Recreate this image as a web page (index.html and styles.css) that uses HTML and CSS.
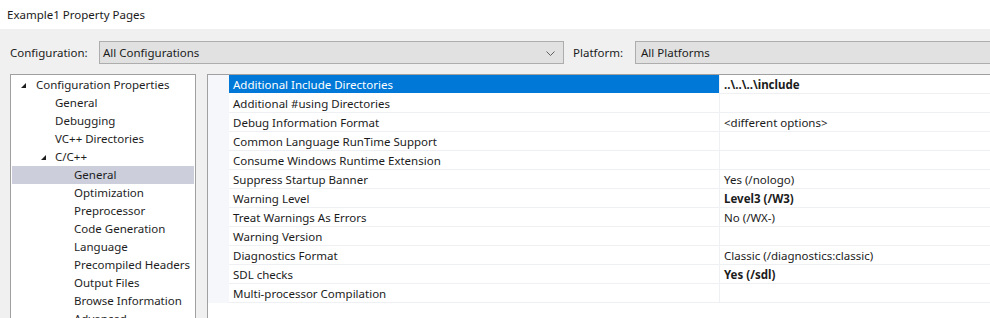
FILE: index.html
```html
<!DOCTYPE html>
<html lang="en">
<head>
<meta charset="utf-8">
<title>Example1 Property Pages</title>
<link rel="stylesheet" href="styles.css">
</head>
<body>
<div class="window">
  <div class="titlebar">Example1 Property Pages</div>
  <div class="client">
    <div class="configrow">
      <span class="lbl lbl-config">Configuration:</span>
      <div class="combo combo-config">
        <span>All Configurations</span>
        <svg class="chev" width="9" height="5" viewBox="0 0 9 5"><path d="M0.5 0.5 L4.5 4.5 L8.5 0.5" fill="none" stroke="#606060" stroke-width="1"/></svg>
      </div>
      <span class="lbl lbl-platform">Platform:</span>
      <div class="combo combo-platform"><span>All Platforms</span></div>
    </div>
    <div class="panes">
      <div class="tree">
        <div class="tnode l0"><span class="tri"></span>Configuration Properties</div>
        <div class="tnode l1">General</div>
        <div class="tnode l1">Debugging</div>
        <div class="tnode l1">VC++ Directories</div>
        <div class="tnode l1 exp"><span class="tri"></span>C/C++</div>
        <div class="tnode l2 sel">General</div>
        <div class="tnode l2">Optimization</div>
        <div class="tnode l2">Preprocessor</div>
        <div class="tnode l2">Code Generation</div>
        <div class="tnode l2">Language</div>
        <div class="tnode l2">Precompiled Headers</div>
        <div class="tnode l2">Output Files</div>
        <div class="tnode l2">Browse Information</div>
        <div class="tnode l2">Advanced</div>
      </div>
      <div class="grid">
        <div class="rows">
          <div class="row selected"><div class="gut"></div><div class="name">Additional Include Directories</div><div class="val bold">..\..\..\include</div></div>
          <div class="row"><div class="gut"></div><div class="name">Additional #using Directories</div><div class="val"></div></div>
          <div class="row"><div class="gut"></div><div class="name">Debug Information Format</div><div class="val">&lt;different options&gt;</div></div>
          <div class="row"><div class="gut"></div><div class="name">Common Language RunTime Support</div><div class="val"></div></div>
          <div class="row"><div class="gut"></div><div class="name">Consume Windows Runtime Extension</div><div class="val"></div></div>
          <div class="row"><div class="gut"></div><div class="name">Suppress Startup Banner</div><div class="val">Yes (/nologo)</div></div>
          <div class="row"><div class="gut"></div><div class="name">Warning Level</div><div class="val bold">Level3 (/W3)</div></div>
          <div class="row"><div class="gut"></div><div class="name">Treat Warnings As Errors</div><div class="val">No (/WX-)</div></div>
          <div class="row"><div class="gut"></div><div class="name">Warning Version</div><div class="val"></div></div>
          <div class="row"><div class="gut"></div><div class="name">Diagnostics Format</div><div class="val">Classic (/diagnostics:classic)</div></div>
          <div class="row"><div class="gut"></div><div class="name">SDL checks</div><div class="val bold">Yes (/sdl)</div></div>
          <div class="row"><div class="gut"></div><div class="name">Multi-processor Compilation</div><div class="val"></div></div>
        </div>
      </div>
    </div>
  </div>
</div>
</body>
</html>
```

FILE: styles.css
```css
* { box-sizing: border-box; }
html, body {
  margin: 0;
  padding: 0;
  width: 990px;
  height: 318px;
  overflow: hidden;
  background: #f0f0f0;
}
body {
  font-family: "Noto Sans", "Open Sans", sans-serif;
  font-size: 11.5px;
  color: #1b1b1b;
}
.window {
  width: 990px;
  height: 318px;
  overflow: hidden;
}
.titlebar {
  height: 29px;
  background: #ffffff;
  padding-left: 7px;
  line-height: 29px;
  color: #1a1a1a;
}
.client {
  background: #f0f0f0;
  padding-top: 12px;
}
.configrow {
  display: flex;
  align-items: center;
  height: 23px;
  width: 1200px;
}
.lbl { white-space: nowrap; flex: none; }
.lbl-config { margin-left: 10px; width: 89px; }
.lbl-platform { margin-left: 9px; width: 62px; }
.combo {
  flex: none;
  height: 23px;
  border: 1px solid #adadad;
  background: #e1e1e1;
  display: flex;
  align-items: center;
  padding-left: 3px;
  position: relative;
}
.combo-config { width: 465px; }
.combo-platform { width: 400px; padding-left: 5px; }
.chev { position: absolute; right: 8px; top: 9px; }
.panes {
  display: flex;
  margin-top: 10px;
  height: 260px;
}
.tree {
  margin-left: 10px;
  width: 186px;
  flex: none;
  background: #ffffff;
  border: 1px solid #a0a0a0;
  border-bottom: none;
  padding: 1px 1px 0 1px;
  color: #1e1e1e;
}
.tnode {
  height: 18px;
  line-height: 18px;
  white-space: nowrap;
  position: relative;
}
.tnode.l0 { padding-left: 24px; }
.tnode.l1 { padding-left: 43px; }
.tnode.l2 { padding-left: 62px; }
.tnode.sel { background: #cccedb; }
.tri {
  position: absolute;
  top: 7px;
  width: 0;
  height: 0;
  border-left: 5px solid transparent;
  border-bottom: 5px solid #1e1e1e;
}
.l0 .tri { left: 9px; }
.l1 .tri { left: 29px; }
.grid {
  margin-left: 11px;
  flex: 1;
  min-width: 800px;
  background: #ffffff;
  border: 1px solid #a0a0a0;
  border-bottom: none;
  border-right: none;
}
.rows { display: flex; flex-direction: column; }
.row {
  display: flex;
  height: 19px;
}
.gut {
  width: 21px;
  flex: none;
  background: #f5f7fb;
}
.name {
  width: 490px;
  flex: none;
  padding-left: 4px;
  padding-top: 1px;
  line-height: 17px;
  border-bottom: 1px solid #eef0f4;
  white-space: nowrap;
  color: #1b1b1b;
}
.val {
  flex: 1;
  padding-left: 4px;
  padding-top: 1px;
  line-height: 17px;
  border-left: 1px solid #eef0f4;
  border-bottom: 1px solid #eef0f4;
  white-space: nowrap;
  color: #1b1b1b;
}
.val.bold { font-weight: 700; }
.row.selected .name {
  background: #0078d7;
  color: #ffffff;
  border-bottom-color: #ffffff;
}
```
